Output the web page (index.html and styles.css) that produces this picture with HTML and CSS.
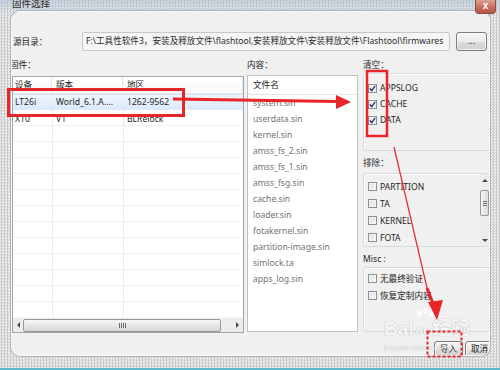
FILE: index.html
```html
<!DOCTYPE html>
<html lang="zh-CN">

<head>
    <meta charset="UTF-8">
    <meta name="viewport" content="width=device-width, initial-scale=1.0">
    <title>固件选择</title>
    <link rel="stylesheet" href="styles.css">
</head>

<body>
    <div class="window">
        <div class="titlebar">
            <span class="title">固件选择</span>
            <span class="close">x</span>
        </div>

        <div class="client">
            <!-- Source folder -->
            <div class="source">
                <label>源目录：</label>
                <div class="path">F:\工具性软件3，安装及释放文件\flashtool,安装释放文件\安装释放文件\Flashtool\firmwares</div>
                <button class="btn browse">...</button>
            </div>

            <div class="main">
                <!-- Firmware list -->
                <div class="col">
                    <div class="caption shifted">固件：</div>
                    <div class="listview">
                        <div class="lv-row lv-head"><span>设备</span><span>版本</span><span>地区</span></div>
                        <div class="lv-body">
                            <div class="lv-row selected"><span>LT26i</span><span>World_6.1.A....</span><span>1262-9562</span></div>
                            <div class="lv-row"><span>X10</span><span>V1</span><span>BLRelock</span></div>
                        </div>
                        <div class="hscroll">
                            <span class="sb-btn"><i class="tri-left"></i></span>
                            <span class="sb-thumb"><i class="grip"></i></span>
                            <span class="sb-track"></span>
                            <span class="sb-btn wide"><i class="tri-right"></i></span>
                        </div>
                    </div>
                </div>

                <!-- Content list -->
                <div class="col">
                    <div class="caption">内容：</div>
                    <div class="filelist">
                        <div class="fl-head">文件名</div>
                        <div class="fl-item">system.sin</div>
                        <div class="fl-item">userdata.sin</div>
                        <div class="fl-item">kernel.sin</div>
                        <div class="fl-item">amss_fs_2.sin</div>
                        <div class="fl-item">amss_fs_1.sin</div>
                        <div class="fl-item">amss_fsg.sin</div>
                        <div class="fl-item">cache.sin</div>
                        <div class="fl-item">loader.sin</div>
                        <div class="fl-item">fotakernel.sin</div>
                        <div class="fl-item">partition-image.sin</div>
                        <div class="fl-item">simlock.ta</div>
                        <div class="fl-item">apps_log.sin</div>
                    </div>
                </div>

                <!-- Options -->
                <div class="col side">
                    <div class="caption">清空：</div>
                    <div class="group clear-group">
                        <div class="chk"><span class="box checked"><svg width="7" height="7" viewBox="0 0 7 7"><polyline points="0.8,3.6 2.8,5.6 6.2,0.9" /></svg></span>APPSLOG</div>
                        <div class="chk"><span class="box checked"><svg width="7" height="7" viewBox="0 0 7 7"><polyline points="0.8,3.6 2.8,5.6 6.2,0.9" /></svg></span>CACHE</div>
                        <div class="chk"><span class="box checked"><svg width="7" height="7" viewBox="0 0 7 7"><polyline points="0.8,3.6 2.8,5.6 6.2,0.9" /></svg></span>DATA</div>
                    </div>

                    <div class="caption gap">排除：</div>
                    <div class="group exclude-group">
                        <div class="ex-list">
                            <div class="chk tall"><span class="box"></span>PARTITION</div>
                            <div class="chk tall"><span class="box"></span>TA</div>
                            <div class="chk tall"><span class="box"></span>KERNEL</div>
                            <div class="chk tall"><span class="box"></span>FOTA</div>
                        </div>
                        <div class="vscroll">
                            <span class="vs-btn"><i class="tri-up"></i></span>
                            <span class="vs-thumb"><i class="vgrip"></i></span>
                            <span class="vs-track"></span>
                            <span class="vs-btn"><i class="tri-down"></i></span>
                        </div>
                    </div>

                    <div class="caption gap">Misc :</div>
                    <div class="group misc-group">
                        <div class="chk tall"><span class="box"></span>无最终验证</div>
                        <div class="chk tall"><span class="box"></span>恢复定制内容</div>
                    </div>
                </div>
            </div>

            <div class="buttons">
                <button class="btn">导入</button>
                <button class="btn">取消</button>
            </div>
        </div>

        <div class="taskline"></div>

        <!-- Baidu jingyan watermark -->
        <div class="watermark">
            <div class="wm-logo"><span>Bai</span><span class="paw">du</span><span>经验</span></div>
            <div class="wm-url">jingyan.baidu.com</div>
        </div>

        <!-- Red annotations drawn over the screenshot -->
        <svg class="marks" width="500" height="370" viewBox="0 0 500 370">
            <rect x="8.5" y="89.5" width="175" height="26" />
            <line x1="173" y1="99" x2="338" y2="101.5" />
            <polygon points="336,95 351,102 336,109" />
            <rect class="thin" x="367" y="71" width="20" height="65" />
            <line class="hair" x1="394" y1="147" x2="428" y2="292" />
            <line x1="427" y1="288" x2="434" y2="306" />
            <polygon points="428,302 443,300 437,320" />
            <rect class="dashed" x="427.5" y="331.5" width="34" height="25" />
        </svg>
    </div>
</body>

</html>
```

FILE: styles.css
```css
* {
    box-sizing: border-box;
}

body {
    margin: 0;
    width: 500px;
    height: 370px;
    overflow: hidden;
    font-family: "Noto Sans", "Noto Sans CJK SC", sans-serif;
    font-size: 8.6px;
    color: #1e1e1e;
    background-color: #e2e2e2;
    background-image: repeating-conic-gradient(#cbcbcb 0 25%, #efefef 0 50%);
    background-size: 3px 3px;
}

.window {
    position: relative;
    height: 370px;
    display: flex;
    flex-direction: column;
}

/* Title bar */
.titlebar {
    height: 11px;
    display: flex;
    align-items: flex-start;
    padding-left: 12px;
    background: linear-gradient(rgba(140, 175, 210, 0.35), rgba(170, 195, 220, 0.15));
}

.title {
    font-size: 9.5px;
    line-height: 10px;
    margin-top: -1px;
    color: #2a2a2a;
}

.close {
    position: relative;
    z-index: 2;
    margin-left: auto;
    margin-right: 4px;
    width: 21px;
    height: 14px;
    line-height: 12px;
    text-align: center;
    color: #fff;
    font-family: "Liberation Sans", sans-serif;
    font-weight: bold;
    font-size: 10px;
    background: linear-gradient(#dba193, #c6695a 60%, #b85848);
    border: 1px solid #8d4c42;
    border-top: none;
    border-radius: 0 0 4px 4px;
}

/* Client area */
.client {
    flex: 1;
    margin: 0 10px 12px 11px;
    border: 1px solid #fbfbfb;
    border-radius: 9px;
    background: #f0f0f0;
    box-shadow: 0 0 0 1px #aab2ba;
    overflow: hidden;
}

.taskline {
    height: 2px;
    background: #5cb8ca;
}

.source {
    display: flex;
    align-items: center;
    height: 20px;
    margin-top: 19px;
}

.source label {
    width: 70px;
    padding-left: 1px;
}

.path {
    flex: 1;
    height: 19px;
    line-height: 17px;
    padding-left: 3px;
    white-space: nowrap;
    overflow: hidden;
    color: #2b2b2b;
    background: #f5f5f5;
    border: 1px solid #c4c8cc;
    border-radius: 2px;
}

.btn {
    font-family: inherit;
    font-size: 8.6px;
    color: #1e1e1e;
    padding: 0;
    border: 1px solid #7a7a7a;
    border-radius: 3px;
    background: linear-gradient(#f4f4f4, #ebebeb 50%, #dcdcdc 51%, #d0d0d0);
    box-shadow: inset 0 0 0 1px rgba(255, 255, 255, 0.7);
}

.browse {
    width: 31px;
    height: 19px;
    margin: 0 2px 0 6px;
    line-height: 12px;
}

/* Three columns */
.main {
    display: grid;
    grid-template-columns: 232px 111px 1fr;
    column-gap: 3px;
    margin-top: 7px;
    height: 275px;
}

.side {
    margin-left: 2px;
}

.caption {
    height: 14px;
    line-height: 14px;
    white-space: nowrap;
}

.caption.shifted {
    margin-left: -2px;
}

.caption.gap {
    margin-top: 5px;
}

/* Firmware list view */
.listview {
    margin-top: 4px;
    height: 257px;
    display: flex;
    flex-direction: column;
    background: #fff;
    border: 1px solid #9ea5ad;
}

.lv-row {
    display: grid;
    grid-template-columns: 39px 71px 1fr;
    height: 16px;
    line-height: 16px;
    white-space: nowrap;
}

.lv-row span {
    padding-left: 4px;
    overflow: hidden;
}

.lv-row span:first-child {
    padding-left: 2px;
}

.lv-head {
    height: 17px;
    border-bottom: 1px solid #e6e8eb;
    background: linear-gradient(#ffffff, #f7f8fa);
}

.lv-head span {
    border-right: 1px solid #e3e6ea;
}

.lv-body {
    flex: 1;
    overflow: hidden;
    background-image:
        repeating-linear-gradient(to bottom, transparent 0 15px, #f0f0f0 15px 16px),
        linear-gradient(to right, transparent 39px, #e5eaf4 39px 40px, transparent 40px 110px, #e5eaf4 110px 111px, transparent 111px);
}

.lv-row.selected {
    background: linear-gradient(#eef5fd, #dbe9fa);
    border-top: 1px solid #d3e3f6;
    line-height: 15px;
}

.lv-row.selected + .lv-row {
    line-height: 18px;
}

.hscroll {
    height: 15px;
    display: flex;
    align-items: center;
    background: #ececec;
    border-top: 1px solid #f6f6f6;
}

.sb-btn {
    width: 10px;
    height: 13px;
    display: flex;
    align-items: center;
    justify-content: center;
}

.sb-btn.wide {
    width: 12px;
}

.sb-thumb {
    width: 198px;
    height: 13px;
    display: flex;
    align-items: center;
    justify-content: center;
    border: 1px solid #979797;
    border-radius: 2px;
    background: linear-gradient(#f7f7f7, #e6e6e6 50%, #d6d6d6);
}

.sb-track {
    flex: 1;
}

.grip {
    width: 7px;
    height: 5px;
    background: repeating-linear-gradient(to right, #6f6f6f 0 1px, transparent 1px 2px);
}

.tri-left,
.tri-right,
.tri-up,
.tri-down {
    width: 0;
    height: 0;
    border: 3px solid transparent;
}

.tri-left {
    border-right-color: #4a4a4a;
    border-left-width: 0;
}

.tri-right {
    border-left-color: #4a4a4a;
    border-right-width: 0;
}

.tri-up {
    border-bottom-color: #4a4a4a;
    border-top-width: 0;
}

.tri-down {
    border-top-color: #4a4a4a;
    border-bottom-width: 0;
}

/* Content list */
.filelist {
    margin-top: 3px;
    height: 257px;
    background: #fff;
    border: 1px solid #bfc3c7;
}

.fl-head {
    height: 19px;
    line-height: 18px;
    padding-left: 5px;
    border-bottom: 1px solid #e3e3e3;
}

.fl-item {
    height: 16px;
    line-height: 16px;
    padding-left: 5px;
    color: #727272;
    white-space: nowrap;
}

/* Option groups */
.group {
    margin-right: -1px;
    border: 1px solid #d3dbe0;
    border-radius: 3px;
    box-shadow: inset 1px 1px 0 #fdfdfd;
}

.clear-group {
    margin-top: 1px;
    height: 78px;
    padding: 6px 0 0 4px;
}

.exclude-group {
    margin-top: 3px;
    height: 74px;
    display: flex;
}

.ex-list {
    flex: 1;
    padding: 4px 0 0 4px;
}

.misc-group {
    margin-top: 1px;
    height: 65px;
    padding: 2px 0 0 4px;
}

.chk {
    display: flex;
    align-items: center;
    gap: 3px;
    height: 16px;
    white-space: nowrap;
}

.chk.tall {
    height: 17px;
}

.box {
    width: 9px;
    height: 9px;
    display: flex;
    align-items: center;
    justify-content: center;
    border: 1px solid #8e8f8f;
    background: linear-gradient(135deg, #dedede, #f8f8f8);
    box-shadow: inset 0 0 0 1px #f4f4f4;
}

.box svg polyline {
    fill: none;
    stroke: #2b3f92;
    stroke-width: 1.5;
}

.vscroll {
    width: 9px;
    display: flex;
    flex-direction: column;
    align-items: center;
    background: #ececec;
}

.vs-btn {
    height: 12px;
    display: flex;
    align-items: center;
}

.vs-thumb {
    width: 9px;
    height: 26px;
    margin-top: 4px;
    display: flex;
    align-items: center;
    justify-content: center;
    border: 1px solid #989898;
    border-radius: 2px;
    background: linear-gradient(to right, #f6f6f6, #dadada);
}

.vgrip {
    width: 4px;
    height: 5px;
    background: repeating-linear-gradient(to bottom, #6f6f6f 0 1px, transparent 1px 2px);
}

.vs-track {
    flex: 1;
}

/* Dialog buttons */
.buttons {
    display: flex;
    gap: 2px;
    margin-top: 8px;
    padding-left: 422px;
}

.buttons .btn {
    flex: none;
    width: 29px;
    height: 17px;
    line-height: 13px;
}

/* Watermark */
.watermark {
    position: absolute;
    left: 384px;
    top: 318px;
    color: rgba(255, 255, 255, 0.92);
    text-shadow: 0 0 1px rgba(0, 0, 0, 0.35);
    pointer-events: none;
}

.wm-logo {
    display: flex;
    align-items: baseline;
    font-family: "Liberation Sans", "Noto Sans CJK SC", sans-serif;
    font-size: 19px;
    font-weight: bold;
    line-height: 22px;
}

.paw {
    position: relative;
    font-size: 12px;
    margin: 0 2px;
}

.paw::before {
    content: "";
    position: absolute;
    left: 1px;
    top: -9px;
    width: 5px;
    height: 6px;
    border-radius: 50%;
    background: rgba(255, 255, 255, 0.92);
    box-shadow: 6px -3px 0 rgba(255, 255, 255, 0.92), 12px 0 0 rgba(255, 255, 255, 0.92);
}

.wm-url {
    font-family: "Liberation Sans", sans-serif;
    font-size: 8px;
    line-height: 10px;
    margin-top: 1px;
}

/* Red annotations */
.marks {
    position: absolute;
    left: 0;
    top: 0;
    pointer-events: none;
}

.marks rect,
.marks line {
    fill: none;
    stroke: #e8262a;
    stroke-width: 3;
}

.marks polygon {
    fill: #e8262a;
}

.marks rect.thin {
    stroke-width: 2.5;
}

.marks line.hair {
    stroke-width: 1.2;
}

.marks rect.dashed {
    stroke-width: 2;
    stroke-dasharray: 3 2;
}
```
